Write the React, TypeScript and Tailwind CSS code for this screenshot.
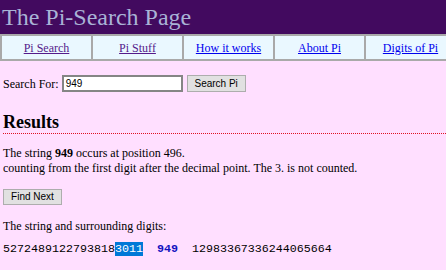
const NAV = [
  { label: 'Pi Search', visited: true },
  { label: 'Pi Stuff', visited: true },
  { label: 'How it works', visited: false },
  { label: 'About Pi', visited: false },
  { label: 'Digits of Pi', visited: false },
];

export default function App() {
  return (
    <div className="w-[446px] h-[270px] overflow-hidden bg-[#ffdfff] text-black font-['Liberation_Serif','Times_New_Roman',serif]">
      {/* Title bar */}
      <div className="h-[34px] bg-[#420a5f] pl-[2px] text-[24px] leading-[34px] text-[#a9b3d6] whitespace-nowrap">
        The Pi-Search Page
      </div>

      {/* Nav table */}
      <div className="flex w-max border border-[#a9a9a9]">
        {NAV.map((n) => (
          <div
            key={n.label}
            className="w-[91px] h-[25px] border border-[#a9a9a9] bg-[#eaf8ff] flex items-center justify-center text-[12px]"
          >
            <a href="#" className={n.visited ? 'underline text-[#551a8b]' : 'underline text-[#0000ee]'}>
              {n.label}
            </a>
          </div>
        ))}
      </div>

      <div className="pl-[3px]">
        {/* Search form */}
        <div className="mt-[14px] flex items-center h-[17px] text-[12px]">
          <span>Search For:</span>
          <div className="ml-[3px] w-[121px] h-[17px] border-2 border-[#858585] bg-white flex items-center pl-[2px] font-['Liberation_Sans',Arial,sans-serif] text-[10px]">
            949
          </div>
          <button className="ml-[4px] w-[59px] h-[17px] bg-[#e1e1e1] border border-[#adadad] font-['Liberation_Sans',Arial,sans-serif] text-[10px] leading-none">
            Search Pi
          </button>
        </div>

        <h2 className="mt-[20px] text-[18px] font-bold leading-[21px] border-b border-dotted border-[#e01020]">
          Results
        </h2>

        <p className="mt-[12px] text-[12px] leading-[15px] whitespace-nowrap">
          The string <b>949</b> occurs at position 496.
          <br />
          counting from the first digit after the decimal point. The 3. is not counted.
        </p>

        <button className="mt-[13px] block w-[59px] h-[16px] bg-[#e1e1e1] border border-[#adadad] font-['Liberation_Sans',Arial,sans-serif] text-[10px] leading-none">
          Find Next
        </button>

        <p className="mt-[14px] text-[12px] leading-[15px]">The string and surrounding digits:</p>

        <p className="mt-[9px] font-['Liberation_Mono','Courier_New',monospace] text-[11.67px] leading-[13px] whitespace-pre">
          5272489122793818<span className="bg-[#0078d7] text-white">3011</span>
          {'  '}
          <b className="text-[#1212c0]">949</b>
          {'  '}12983367336244065664
        </p>
      </div>
    </div>
  );
}
